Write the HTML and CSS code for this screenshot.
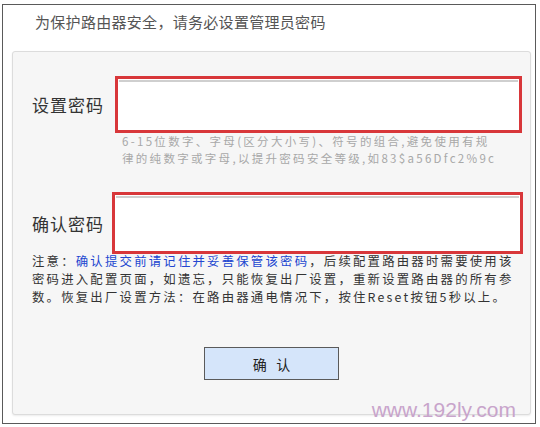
FILE: index.html
```html
<!DOCTYPE html>
<html lang="zh-CN">

<head>
  <meta charset="UTF-8">
  <title>设置管理员密码</title>
  <meta name="viewport" content="width=device-width, initial-scale=1.0">
  <link rel="stylesheet" href="styles.css">
</head>

<body>
  <div class="frame">
    <div class="title">为保护路由器安全，请务必设置管理员密码</div>

    <div class="panel">
      <!-- SET PASSWORD -->
      <div class="row">
        <label class="row__label" for="pwd">设置密码</label>
        <div class="field field--first">
          <input id="pwd" type="password" class="field__input">
        </div>
      </div>
      <p class="hint">6-15位数字、字母(区分大小写)、符号的组合,避免使用有规<br>律的纯数字或字母,以提升密码安全等级,如83$a56Dfc2%9c</p>

      <!-- CONFIRM PASSWORD -->
      <div class="row row--second">
        <label class="row__label" for="pwd2">确认密码</label>
        <div class="field field--second">
          <input id="pwd2" type="password" class="field__input">
        </div>
      </div>
      <p class="note">注意：<span class="note__link">确认提交前请记住并妥善保管该密码</span>，后续配置路由器时需要使用该<br>密码进入配置页面，如遗忘，只能恢复出厂设置，重新设置路由器的所有参<br>数。恢复出厂设置方法：在路由器通电情况下，按住Reset按钮5秒以上。</p>

      <div class="actions">
        <button class="btn" type="button">确&nbsp;&nbsp;&nbsp;认</button>
      </div>
    </div>

    <div class="watermark">www.192ly.com</div>
  </div>
</body>

</html>
```

FILE: styles.css
```css
:root {
  --frameColor: #5a5a5a;
  --panelBgColor: #f6f6f6;
  --panelBorderColor: #dcdcdc;
  --textColor: #333;
  --titleColor: #555;
  --hintColor: #a8a8a8;
  --linkColor: #2246d0;
  --fieldBorderColor: #d8373a;
  --btnBgColor: #d5e5fa;
  --cjkFont: "Noto Sans CJK SC", "Liberation Sans", sans-serif;
}

* {
  box-sizing: border-box;
}

body {
  margin: 0;
  background: #fff;
  font-family: var(--cjkFont);
  color: var(--textColor);
}

.frame {
  position: relative;
  width: 534px;
  height: 420px;
  margin: 4px 0 0 2px;
  border: 1px solid var(--frameColor);
  background: #fff;
}

.title {
  height: 46px;
  padding-left: 32px;
  line-height: 34px;
  font-size: 15px;
  letter-spacing: 0.3px;
  color: var(--titleColor);
}

.panel {
  height: 364px;
  margin: 0 4px 0 9px;
  padding-top: 24px;
  border: 1px solid var(--panelBorderColor);
  border-radius: 3px;
  background: var(--panelBgColor);
  box-shadow: 0 1px 2px rgba(0, 0, 0, 0.08);
}

.row {
  display: flex;
  align-items: center;
}

.row--second {
  margin-top: 26px;
}

.row__label {
  width: 102px;
  padding-left: 19px;
  font-size: 17px;
  letter-spacing: 1px;
  white-space: nowrap;
  flex: none;
}

.row--second .row__label {
  width: 99px;
}

.field {
  display: flex;
  border: 3px solid var(--fieldBorderColor);
  background: #fff;
  padding: 1px;
}

.field--first {
  width: 407px;
  height: 57px;
}

.field--second {
  width: 411px;
  height: 62px;
}

.field__input {
  flex: 1;
  border: 0;
  border-top: 2px solid #cfcfcf;
  background: #fff;
  outline: 0;
  margin: 0;
  padding: 0;
}

.hint {
  margin: 0;
  padding-left: 109px;
  font-size: 11.5px;
  line-height: 16.7px;
  letter-spacing: 2.3px;
  color: var(--hintColor);
  white-space: nowrap;
}

.note {
  margin: -2px 0 0;
  padding-left: 19px;
  font-size: 12.4px;
  line-height: 18px;
  letter-spacing: 2.2px;
  color: var(--textColor);
  white-space: nowrap;
}

.note__link {
  color: var(--linkColor);
}

.actions {
  display: flex;
  justify-content: center;
  margin-top: 41px;
}

.btn {
  width: 135px;
  height: 33px;
  border: 1px solid var(--frameColor);
  background: var(--btnBgColor);
  font-family: var(--cjkFont);
  font-size: 14px;
  color: #222;
  padding: 0;
}

.watermark {
  position: absolute;
  right: 19px;
  bottom: 1px;
  font-family: "Liberation Sans", Arial, sans-serif;
  font-size: 21px;
  line-height: 24px;
  color: #c8a4cb;
}
```
